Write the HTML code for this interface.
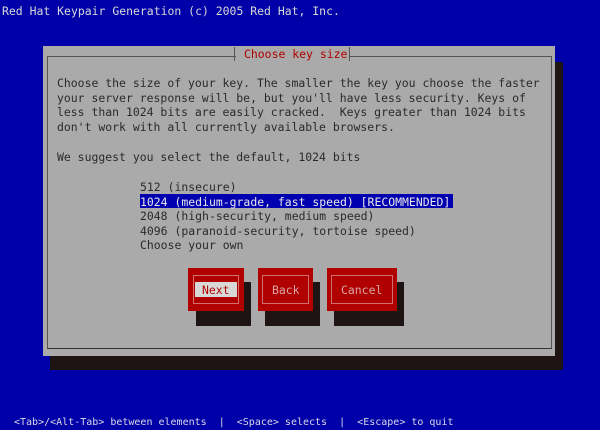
<!DOCTYPE html>
<html><head><meta charset="utf-8"><style>
*{margin:0;padding:0;box-sizing:border-box}
body{width:600px;height:428px;background:#0000a8;position:relative;overflow:hidden;font-family:"DejaVu Sans Mono","Liberation Mono",monospace;font-size:11.46px;}
.a{position:absolute;white-space:pre;line-height:14px}
.t{color:#2a2a2a}
</style></head><body>
<div class="a" style="left:2px;top:4px;color:#d8d8d8">Red Hat Keypair Generation (c) 2005 Red Hat, Inc.</div>
<div style="position:absolute;left:50px;top:62px;width:513px;height:308px;background:#1e1414"></div>
<div style="position:absolute;left:43px;top:46px;width:512px;height:310px;background:#aaaaaa"></div>
<div style="position:absolute;left:47px;top:56px;width:505px;height:293px;border:1px solid #555;border-bottom-color:#333"></div>
<div style="position:absolute;left:236px;top:50px;width:113px;height:8px;background:#aaa"></div>
<div style="position:absolute;left:234px;top:47px;width:1px;height:14px;background:#555"></div>
<div style="position:absolute;left:349px;top:47px;width:1px;height:14px;background:#555"></div>
<div class="a" style="left:244px;top:47px;color:#b00000">Choose key size</div>
<div class="a t" style="left:57px;top:76px;line-height:14.7px">Choose the size of your key. The smaller the key you choose the faster
your server response will be, but you'll have less security. Keys of
less than 1024 bits are easily cracked.  Keys greater than 1024 bits
don't work with all currently available browsers.

We suggest you select the default, 1024 bits</div>
<div style="position:absolute;left:140px;top:194px;width:313px;height:14px;background:#0000b0"></div>
<div class="a t" style="left:140px;top:180px;line-height:14.6px">512 (insecure)
<span style="color:#e8e8e8">1024 (medium-grade, fast speed) [RECOMMENDED]</span>
2048 (high-security, medium speed)
4096 (paranoid-security, tortoise speed)
Choose your own</div>
<div style="position:absolute;left:196px;top:282px;width:55px;height:44px;background:#1e1414"></div>
<div style="position:absolute;left:265px;top:282px;width:55px;height:44px;background:#1e1414"></div>
<div style="position:absolute;left:334px;top:282px;width:70px;height:44px;background:#1e1414"></div>
<div style="position:absolute;left:188px;top:268px;width:56px;height:43px;background:#b00000"></div>
<div style="position:absolute;left:193px;top:275px;width:46px;height:29px;border:1px solid #d07070"></div>
<div style="position:absolute;left:195px;top:282px;width:42px;height:15px;background:#d8d8d8"></div>
<div class="a" style="left:202px;top:283px;color:#b00000">Next</div>
<div style="position:absolute;left:258px;top:268px;width:55px;height:43px;background:#b00000"></div>
<div style="position:absolute;left:262px;top:275px;width:47px;height:29px;border:1px solid #d07070"></div>
<div class="a" style="left:272px;top:283px;color:#d8a8a8">Back</div>
<div style="position:absolute;left:327px;top:268px;width:70px;height:43px;background:#b00000"></div>
<div style="position:absolute;left:331px;top:275px;width:62px;height:29px;border:1px solid #d07070"></div>
<div class="a" style="left:341px;top:283px;color:#d8a8a8">Cancel</div>
<div class="a" style="left:14px;top:416px;color:#d8d8e8;font-size:10px">&lt;Tab&gt;/&lt;Alt-Tab&gt; between elements  |  &lt;Space&gt; selects  |  &lt;Escape&gt; to quit</div>
</body></html>
